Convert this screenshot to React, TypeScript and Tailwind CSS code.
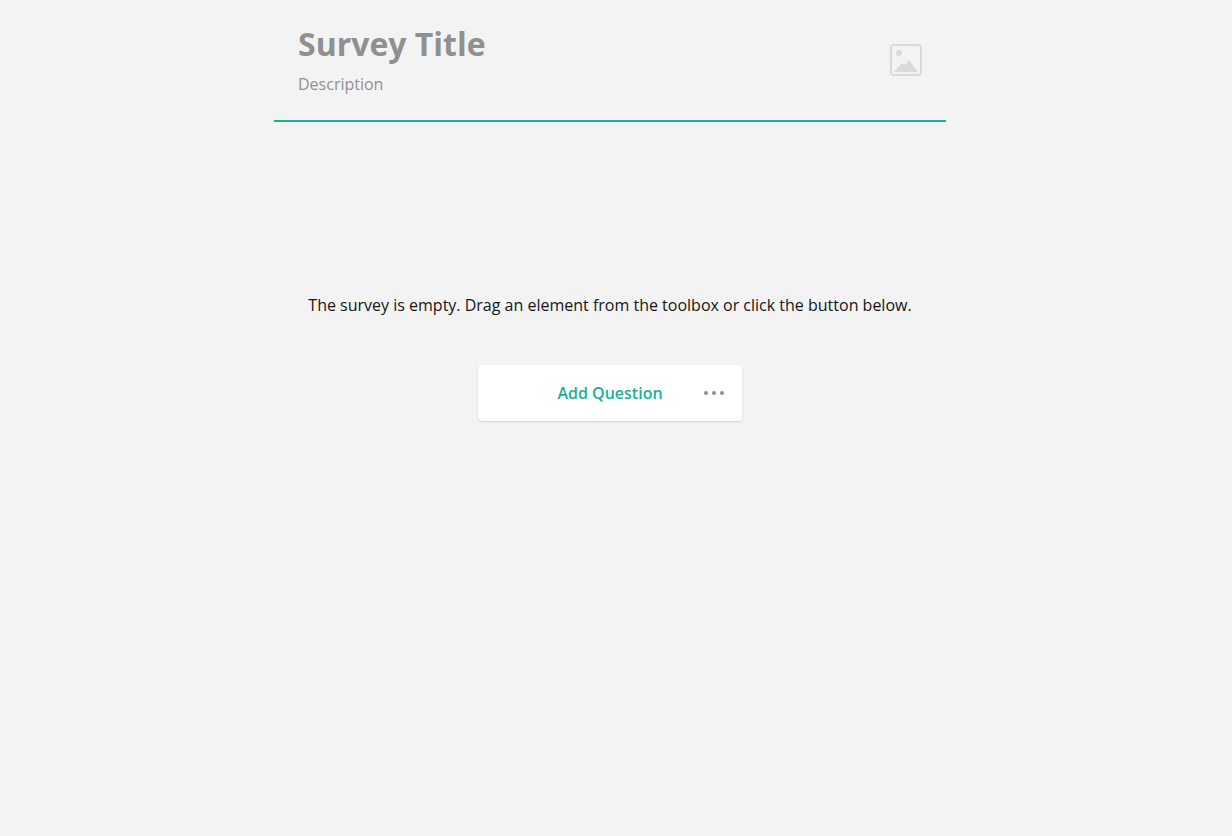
function ImageIcon() {
  return (
    <svg viewBox="0 0 32 32" className="size-8" aria-hidden="true">
      <rect x="1" y="1" width="30" height="30" rx="3" fill="none" stroke="#dadada" strokeWidth="2" />
      <circle cx="9" cy="9" r="3" fill="#dadada" />
      <path d="M4 28L12 19L15 21L19 16L28 28Z" fill="#dadada" />
    </svg>
  );
}

function DotsIcon() {
  return (
    <svg viewBox="0 0 24 24" className="size-6" fill="#909090" aria-hidden="true">
      <circle cx="4" cy="12" r="2" />
      <circle cx="12" cy="12" r="2" />
      <circle cx="20" cy="12" r="2" />
    </svg>
  );
}

function SurveyHeader() {
  return (
    <header className="flex items-start justify-between border-b-2 border-[#19b394] px-6 pt-6 pb-6">
      <div className="flex flex-col gap-2">
        <h1 className="text-[32px] leading-10 font-bold text-[#909090]">Survey Title</h1>
        <p className="text-base leading-6 text-[#909090]">Description</p>
      </div>
      <button type="button" aria-label="Choose logo" className="mt-5">
        <ImageIcon />
      </button>
    </header>
  );
}

function AddQuestion() {
  return (
    <div className="relative w-full max-w-[264px] rounded bg-white shadow-[0_1px_2px_rgba(0,0,0,0.15)]">
      <button type="button" className="h-14 w-full rounded text-base font-semibold text-[#19b394]">
        Add Question
      </button>
      <button type="button" aria-label="Question type" className="absolute inset-y-0 right-4 flex items-center">
        <DotsIcon />
      </button>
    </div>
  );
}

export default function App() {
  return (
    <div className="min-h-screen bg-[#f3f3f3] pr-3 font-['Open_Sans',sans-serif]">
      <div className="mx-auto max-w-[672px]">
        <SurveyHeader />
        <main className="flex flex-col items-center gap-12 pt-[171px]">
          <p className="text-center text-base leading-6 text-[#161616]">
            The survey is empty. Drag an element from the toolbox or click the button below.
          </p>
          <AddQuestion />
        </main>
      </div>
    </div>
  );
}
